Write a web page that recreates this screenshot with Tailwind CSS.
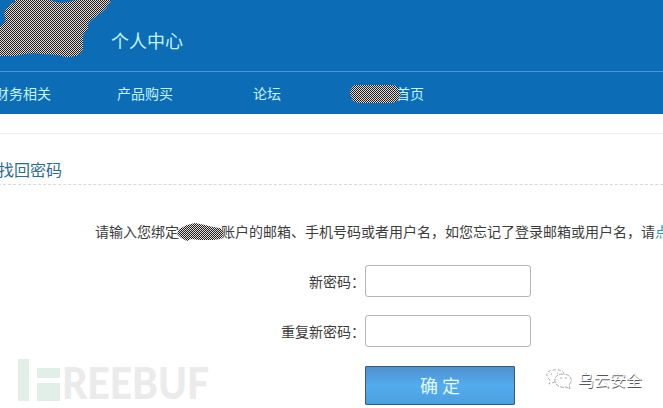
<!DOCTYPE html>
<html lang="zh-CN">
<head>
<meta charset="utf-8">
<title>找回密码</title>
<script src="https://cdn.jsdelivr.net/npm/@tailwindcss/browser@4"></script>
</head>
<body class="relative h-[408px] w-[663px] overflow-hidden bg-white font-['Noto_Sans_CJK_SC',sans-serif] text-[14px] leading-[20px] text-[#3c3c3c]">
<svg class="absolute size-0" aria-hidden="true">
  <defs>
    <pattern id="checker" width="2" height="2" patternUnits="userSpaceOnUse">
      <rect width="2" height="2" fill="#dcdad8" shape-rendering="crispEdges"/>
      <path d="M0 0h1v1h-1zM1 1h1v1h-1z" fill="#25201f" shape-rendering="crispEdges"/>
    </pattern>
  </defs>
</svg>
<header class="relative h-[114px] bg-[#0c6db6] text-[#c3f4fb]">
  <svg class="absolute left-0 top-0" width="112" height="60" viewBox="0 0 112 60"><path d="M15 0H111C109 6 105 9 101 13C95 17 91 20 88 24V29L83 35V49C81 56 74 57 65 57C58 54 51 55 43 54C32 52 23 54 15 56H0V27L6 20L4 14C7 6 11 4 15 2Z" fill="url(#checker)"/><path d="M51 0C57 4 65 3 77 0Z" fill="#0c6db6"/></svg>
  <div class="flex h-[72px] items-start border-b border-[#3d96df] pl-[111px] pt-[27px]">
    <h1 class="text-[18px] leading-[26px]">个人中心</h1>
  </div>
  <nav class="flex pt-[11px]">
    <a class="-ml-[5px] w-[122px]">财务相关</a>
    <a class="w-[136px]">产品购买</a>
    <a class="w-[97px]">论坛</a>
    <a class="relative flex"><svg class="relative top-px z-10 -mr-[5px]" width="51" height="20" viewBox="0 0 51 20"><path d="M5 1H44Q48 2 49 6L51 10Q50 14 47 17L43 19H8Q1 17 0 10Q0 4 5 1Z" fill="url(#checker)"/></svg>首页</a>
  </nav>
</header>
<main>
  <div class="h-[20px] border-b border-[#ececec]"></div>
  <h2 class="-ml-[2px] h-[51px] border-b border-dashed border-[#d9d9d9] pt-[23px] text-[16px] leading-[24px] text-[#2c6b8b]">找回密码</h2>
  <p class="flex h-[80px] whitespace-nowrap pl-[95px] pt-[36px]">
    <span>请输入您绑定</span>
    <svg class="relative top-px z-10 -ml-[2px] mr-[-2px] shrink-0" width="47" height="20" viewBox="0 0 47 20"><path d="M0 12L2 7L10 3L18 1L28 3L36 5L43 6L47 11L44 17L36 18H23L14 17L10 19L4 16Z" fill="url(#checker)"/></svg>
    <span class="-ml-px">账户的邮箱、手机号码或者用户名，如您忘记了登录邮箱或用户名，请<a class="text-[#1b98b5]">点</a></span>
  </p>
  <form class="grid grid-cols-[365px_166px] gap-y-[18px]">
    <label class="pt-[6px] text-right">新密码：</label>
    <input type="text" class="h-[32px] rounded-[3px] border border-[#b5b5b8] bg-white">
    <label class="pt-[6px] text-right">重复新密码：</label>
    <input type="text" class="h-[32px] rounded-[3px] border border-[#b5b5b8] bg-white">
    <button type="button" class="col-start-2 mt-[1px] h-[39px] w-[150px] rounded-[1px] border border-[#3c5770] bg-linear-to-b from-[#4f91cf] via-[#53acef] to-[#4b9fdf] pb-[2px] text-[18px] leading-[34px] text-[#e1faff]">确 定</button>
  </form>
</main>
<svg class="absolute left-[18px] top-[358px]" width="192" height="44" viewBox="0 0 192 44">
  <path d="M0 1h11v42H0zM19 10h23v10H19zM19 25h23v18H19z" fill="#e1efe8"/>
  <text x="44" y="41" font-family="Lato,sans-serif" font-weight="900" font-size="43" fill="#ebebeb" textLength="147" lengthAdjust="spacingAndGlyphs">REEBUF</text>
</svg>
<div class="absolute left-[545px] top-[367px] flex">
  <svg width="28" height="24" viewBox="0 0 28 24" fill="none" stroke="#a0a0a5" stroke-width=".9">
    <path d="M10 15L4 17L5 13C-1 8 2 3 9 3C14 2 18 4 19 6" stroke-dasharray="3 2"/>
    <path d="M18 7C11 7 8 12 11 17C14 20 18 21 21 20L25 22L24 18C29 13 25 7 18 7Z" stroke-dasharray="4 1"/>
    <path d="M6 7h1M12 6h1M15 11h2M20 11h2"/>
  </svg>
  <span class="ml-[5px] text-[16px] leading-[24px] text-white [text-shadow:0.6px_0.8px_0_#55555b]">乌云安全</span>
</div>
</body>
</html>
